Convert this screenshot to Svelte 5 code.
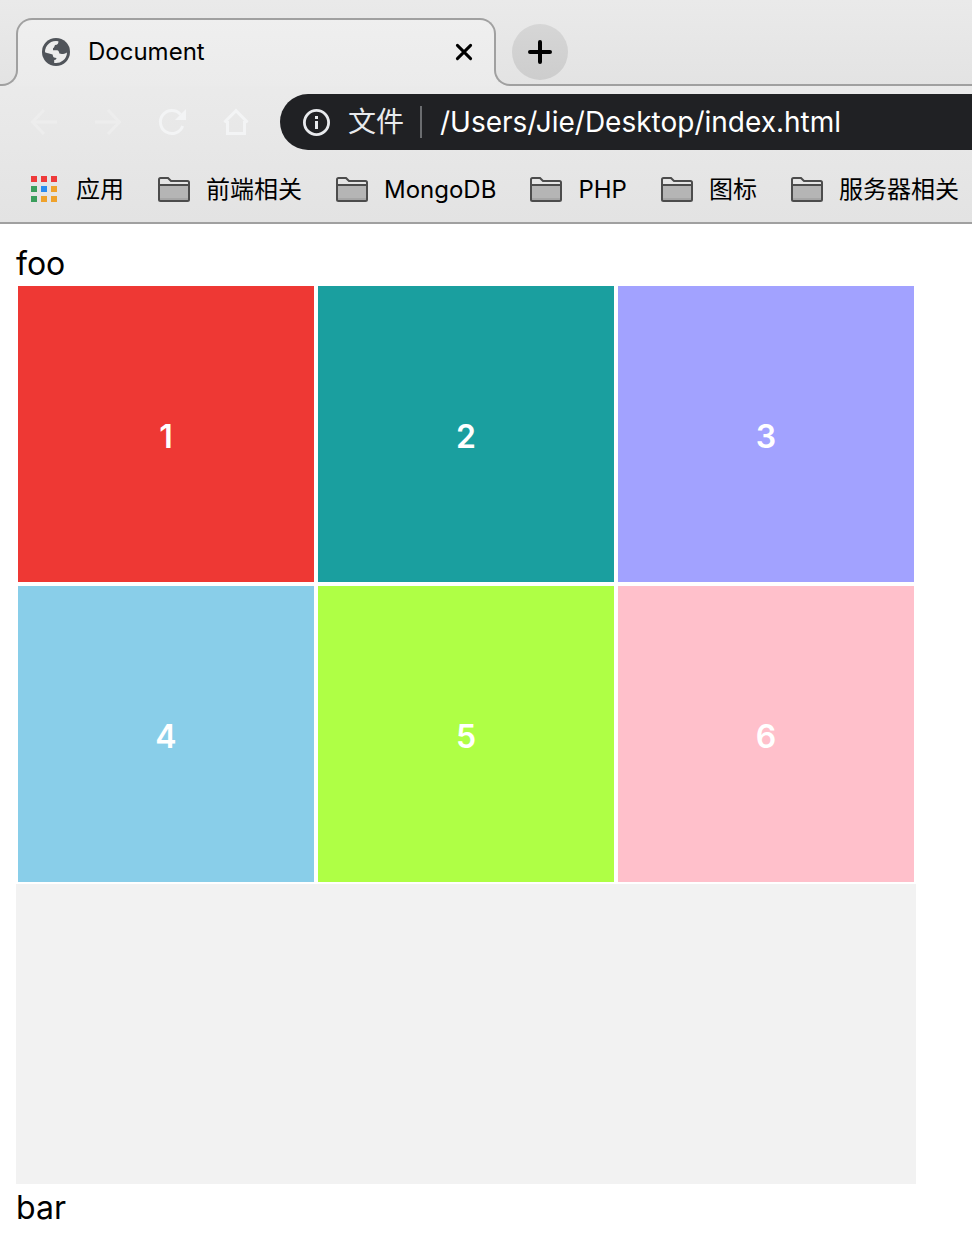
<script>
  const folders = ['前端相关', 'MongoDB', 'PHP', '图标', '服务器相关'];
  const appDots = ['red', 'red', 'red', 'green', 'blue', 'orange', 'green', 'orange', 'orange'];
  const boxes = [1, 2, 3, 4, 5, 6];
</script>

<header class="browser">
  <div class="tabs">
    <div class="edge left"></div>
    <div class="tab-slot">
      <div class="tab">
        <svg class="globe" viewBox="0 0 28 28" width="28" height="28" aria-hidden="true">
          <circle cx="14" cy="14" r="14" fill="#50545a" />
          <path
            d="M16.4 3.2 C16.6 5.6 15.6 6.8 13 7 C12.4 8.4 12.2 9.6 11 10.2 L11 12.2 L15 12.2 C16.6 12.4 17 13.8 17.4 15.4 L19.8 16 C21.6 16 23 15.4 25 14.4 A11 11 0 0 1 12.2 24.9 L12.2 22 C13.8 22 14.6 21.2 14.4 20 L12 19.6 C11 18.6 10.8 17.4 10.6 16.4 C8.6 15.8 5.6 15.2 3 14.2 A11 11 0 0 1 16.4 3.2 Z"
            fill="#ececec"
          />
        </svg>
        <span class="title">Document</span>
        <button class="close" aria-label="Close tab">
          <svg viewBox="0 0 20 20" width="20" height="20" aria-hidden="true">
            <path d="M3.4 3.4 L16.6 16.6 M16.6 3.4 L3.4 16.6" stroke="#000" stroke-width="3" stroke-linecap="round" />
          </svg>
        </button>
      </div>
    </div>
    <div class="edge right">
      <button class="new-tab" aria-label="New tab">
        <svg viewBox="0 0 24 24" width="24" height="24" aria-hidden="true">
          <path d="M12 2 V22 M2 12 H22" stroke="#000" stroke-width="4" stroke-linecap="round" />
        </svg>
      </button>
    </div>
  </div>

  <div class="toolbar">
    <button class="nav faint" aria-label="Back">
      <svg viewBox="0 0 32 32" width="32" height="32" aria-hidden="true">
        <path d="M29 16 H4.5 M16 4 L4.5 16 L16 28" />
      </svg>
    </button>
    <button class="nav faint" aria-label="Forward">
      <svg viewBox="0 0 32 32" width="32" height="32" aria-hidden="true">
        <path d="M3 16 H27.5 M16 4 L27.5 16 L16 28" />
      </svg>
    </button>
    <button class="nav" aria-label="Reload">
      <svg viewBox="0 0 32 32" width="32" height="32" aria-hidden="true">
        <path d="M26.7 20 A11.5 11.5 0 1 1 24.5 8.4" />
        <path class="solid" d="M30 3 V14 H19 Z" />
      </svg>
    </button>
    <button class="nav" aria-label="Home">
      <svg viewBox="0 0 32 32" width="32" height="32" aria-hidden="true">
        <path d="M7.5 15 V27.5 H24.5 V15 M4.5 16.2 L16 4.6 L27.5 16.2 M4.5 15.5 H8 M24 15.5 H27.5" />
      </svg>
    </button>
    <div class="address">
      <svg viewBox="0 0 28 28" width="28" height="28" aria-hidden="true">
        <circle cx="14.5" cy="14.5" r="12.1" fill="none" stroke="#e8eaed" stroke-width="2.8" />
        <path d="M13 8 H16 V11 H13 Z M13 13 H16 V21 H13 Z" fill="#e8eaed" />
      </svg>
      <label for="url">文件</label>
      <input id="url" type="text" value="/Users/Jie/Desktop/index.html" spellcheck="false" />
    </div>
  </div>

  <nav class="bookmarks">
    <a href="#apps">
      <span class="dots">
        {#each appDots as color}<i class={color}></i>{/each}
      </span>
      应用
    </a>
    {#each folders as name}
      <a href="#folder">
        <svg viewBox="0 0 32 26" width="32" height="26" aria-hidden="true">
          <path d="M1 8 H31 V24 H1 Z" fill="#b5b5b5" />
          <path d="M2 21 H30 V23 H2 Z" fill="#a6a6a6" />
          <path
            d="M1 2.5 Q1 1 2.5 1 H10 L13 4 H29.5 Q31 4 31 5.5 V22.5 Q31 24 29.5 24 H2.5 Q1 24 1 22.5 Z M1 8 H31"
            fill="none"
            stroke="#4c4c4c"
            stroke-width="2"
          />
        </svg>
        {name}
      </a>
    {/each}
  </nav>
</header>

<main>
  <p>foo</p>
  <div class="grid">
    {#each boxes as n}
      <div class="box b{n}">{n}</div>
    {/each}
  </div>
  <p>bar</p>
</main>

<style>
  :global(body) {
    background: #fff;
    color: #000;
    font-family: Inter, 'Noto Sans CJK SC', sans-serif;
    overflow-x: hidden;
  }

  .browser,
  .browser *,
  main,
  main * {
    box-sizing: border-box;
  }

  button {
    display: grid;
    place-items: center;
    padding: 0;
    border: 0;
    background: none;
    color: inherit;
  }

  svg {
    flex: none;
  }

  .browser {
    background: linear-gradient(#efefef, #e3e3e3);
    border-bottom: 2px solid #a0a0a0;
    overflow: hidden;
  }

  .tabs {
    display: flex;
    height: 86px;
  }

  .edge,
  .tab-slot {
    background: linear-gradient(#eaeaea, #e3e3e3);
  }

  .edge {
    position: relative;
    z-index: 1;
  }

  .edge.left {
    width: 18px;
    margin-right: -2px;
    border-bottom-right-radius: 16px;
  }

  .edge.right {
    flex: 1;
    display: flex;
    align-items: center;
    margin-left: -2px;
    padding: 18px 18px 0;
    border-bottom-left-radius: 16px;
  }

  .edge::after {
    content: '';
    position: absolute;
    inset: auto 0 0;
    height: 34px;
    border-bottom: 2px solid #a0a0a0;
    pointer-events: none;
  }

  .edge.left::after {
    border-right: 2px solid #a0a0a0;
    border-bottom-right-radius: 16px;
  }

  .edge.right::after {
    border-left: 2px solid #a0a0a0;
    border-bottom-left-radius: 16px;
  }

  .tab-slot {
    width: 480px;
    padding-top: 18px;
  }

  .tab {
    position: relative;
    display: flex;
    align-items: center;
    gap: 18px;
    height: 68px;
    padding: 0 22px 0 26px;
    border-radius: 16px 16px 0 0;
    background: linear-gradient(#efefef, #ebebeb);
    font-size: 24px;
    line-height: 32px;
  }

  .tab::before {
    content: '';
    position: absolute;
    inset: 0 0 34px;
    z-index: 2;
    border: 2px solid #a0a0a0;
    border-bottom: 0;
    border-radius: 16px 16px 0 0;
    pointer-events: none;
  }

  .title {
    flex: 1;
  }

  .new-tab {
    width: 56px;
    height: 56px;
    border-radius: 50%;
    background: linear-gradient(#d6d6d6, #cdcdcd);
  }

  .toolbar {
    display: flex;
    align-items: center;
    gap: 32px;
    padding: 8px 0 8px 28px;
  }

  .nav {
    width: 32px;
    height: 32px;
  }

  .nav svg {
    fill: none;
    stroke: #f3f4f5;
    stroke-width: 3;
  }

  .nav.faint svg {
    stroke: #ededed;
  }

  .nav .solid {
    fill: #f3f4f5;
    stroke: none;
  }

  .address {
    flex: 1;
    display: flex;
    align-items: center;
    height: 56px;
    margin-left: -4px;
    padding-left: 22px;
    border-radius: 28px 0 0 28px;
    background: #202124;
    color: #e8eaed;
    font-size: 28px;
    line-height: 32px;
  }

  .address label {
    margin-left: 18px;
    padding-right: 16px;
    border-right: 2px solid #6b6d70;
    white-space: nowrap;
  }

  .address input {
    flex: 1;
    min-width: 0;
    padding: 0 0 0 18px;
    border: 0;
    outline: 0;
    background: none;
    color: #fff;
    font: inherit;
  }

  .bookmarks {
    display: flex;
    align-items: center;
    gap: 34px;
    height: 64px;
    padding-left: 30px;
    font-size: 24px;
    line-height: 32px;
    white-space: nowrap;
  }

  .bookmarks a {
    display: flex;
    align-items: center;
    gap: 16px;
    color: inherit;
    text-decoration: none;
  }

  .dots {
    display: grid;
    grid-template-columns: repeat(3, 6px);
    gap: 4px;
    padding: 0 3px 2px 1px;
  }

  .dots i {
    height: 6px;
  }

  .red {
    background: #ee3a3a;
  }

  .green {
    background: #3a9e5c;
  }

  .blue {
    background: #2a8cf0;
  }

  .orange {
    background: #efa22c;
  }

  main {
    padding: 16px;
  }

  p {
    margin: 0;
    padding-top: 4px;
    font-size: 32px;
    line-height: 40px;
  }

  .grid {
    display: grid;
    grid-template-columns: repeat(3, 1fr);
    grid-auto-rows: 300px;
    max-width: 900px;
    min-height: 900px;
    background: #f2f2f2;
  }

  .box {
    display: grid;
    place-items: center;
    padding-top: 4px;
    border: 2px solid #fff;
    color: #fff;
    font-size: 32px;
    font-weight: 600;
  }

  .b1 {
    background: #ee3834;
  }

  .b2 {
    background: #1a9f9f;
  }

  .b3 {
    background: #a2a2ff;
  }

  .b4 {
    background: #89cee9;
  }

  .b5 {
    background: #afff45;
  }

  .b6 {
    background: #ffc0cb;
  }
</style>
